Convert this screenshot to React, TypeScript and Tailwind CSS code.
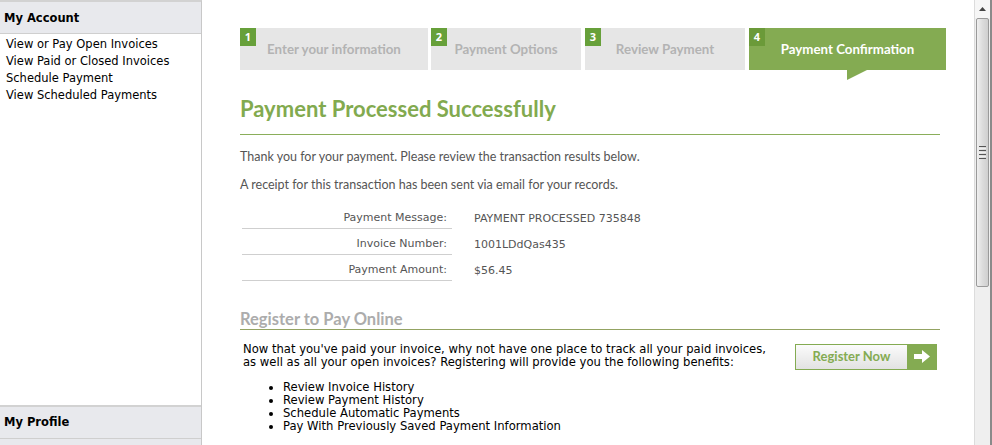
import React from "react";

const steps = [
  { n: 1, label: "Enter your information", w: "w-[188px]" },
  { n: 2, label: "Payment Options", w: "w-[150px] ml-[3px]" },
  { n: 3, label: "Review Payment", w: "w-[160px] ml-[4px]" },
  { n: 4, label: "Payment Confirmation", w: "w-[197px] ml-[4px]", active: true },
];

const details = [
  ["Payment Message:", "PAYMENT PROCESSED 735848"],
  ["Invoice Number:", "1001LDdQas435"],
  ["Payment Amount:", "$56.45"],
];

const benefits = [
  "Review Invoice History",
  "Review Payment History",
  "Schedule Automatic Payments",
  "Pay With Previously Saved Payment Information",
];

const verdana = "font-['DejaVu_Sans',Verdana,sans-serif]";
const calibri = "font-['Lato','Open_Sans',sans-serif]";

function Sidebar() {
  return (
    <aside className={`w-[202px] shrink-0 flex flex-col border-r border-[#c8c8c8] border-t-2 border-t-[#d2d2d2] ${verdana}`}>
      <div className="h-[32px] bg-[#e8e9ed] border-b border-[#cfcfcf] flex items-center pl-[4px] pt-[2px] text-[11.5px] font-bold text-black">
        My Account
      </div>
      <ul className="pl-[6px] pt-[2px] text-[11.5px] leading-[17px] text-black flex-1">
        <li>View or Pay Open Invoices</li>
        <li>View Paid or Closed Invoices</li>
        <li>Schedule Payment</li>
        <li>View Scheduled Payments</li>
      </ul>
      <div className="h-[33px] bg-[#e8e9ed] border-t-2 border-[#d2d2d2] flex items-center pl-[4px] pt-[1px] text-[11.5px] font-bold text-black">
        My Profile
      </div>
      <div className="h-[7px] bg-[#e8e9ed] border-t border-[#cfcfcf]" />
    </aside>
  );
}

function Steps() {
  return (
    <div className="relative flex h-[42px]">
      {steps.map((s) => (
        <div
          key={s.n}
          className={`${s.w} relative flex items-center justify-center ${s.active ? "bg-[#84ab52] text-white" : "bg-[#e6e6e6] text-[#b3b3b3]"}`}
        >
          <span
            className={`absolute left-0 top-0 w-[16px] h-[18px] flex items-center justify-center text-[11px] font-bold text-white ${s.active ? "bg-[#6b9a39]" : "bg-[#67a03a]"}`}
          >
            {s.n}
          </span>
          <span className={`${calibri} text-[13.3px] font-bold pt-[2px]`}>{s.label}</span>
          {s.active && (
            <svg className="absolute left-[98px] top-[42px]" width="20" height="10" viewBox="0 0 20 10">
              <polygon points="0,0 20,0 0,10" fill="#84ab52" />
            </svg>
          )}
        </div>
      ))}
    </div>
  );
}

function RegisterButton() {
  return (
    <button className="flex h-[26px] w-[142px] border border-[#84ab52]">
      <span className={`flex-1 flex items-center justify-center bg-gradient-to-b from-[#fbfbfb] to-[#e2e2e2] text-[#84ab52] text-[13px] font-bold ${calibri}`}>
        Register Now
      </span>
      <span className="w-[29px] bg-[#84ab52] flex items-center justify-center">
        <svg width="16" height="13" viewBox="0 0 16 13">
          <polygon points="0,4 8,4 8,0 16,6.5 8,13 8,9 0,9" fill="#fff" />
        </svg>
      </span>
    </button>
  );
}

function Scrollbar() {
  return (
    <div className="w-[18px] shrink-0 bg-[#efefef] border-l border-[#dcdcdc] border-r-2 border-r-[#8a8a8a] flex flex-col">
      <div className="h-[18px] bg-[#f6f6f6] flex items-center justify-center">
        <svg width="7" height="4" viewBox="0 0 7 4">
          <polygon points="3.5,0 7,4 0,4" fill="#444" />
        </svg>
      </div>
      <div className="h-[269px] mx-[1px] border border-[#9a9a9a] rounded-[2px] bg-gradient-to-r from-[#f0f0f0] via-[#dcdcdc] to-[#cfcfcf] flex items-center justify-center">
        <div className="flex flex-col gap-[1px]">
          <div className="w-[7px] h-[1px] bg-[#555]" />
          <div className="w-[7px] h-[1px] bg-[#eee]" />
          <div className="w-[7px] h-[1px] bg-[#555]" />
          <div className="w-[7px] h-[1px] bg-[#eee]" />
          <div className="w-[7px] h-[1px] bg-[#555]" />
          <div className="w-[7px] h-[1px] bg-[#eee]" />
          <div className="w-[7px] h-[1px] bg-[#555]" />
        </div>
      </div>
      <div className="flex-1" />
    </div>
  );
}

export default function App() {
  return (
    <div className="w-[992px] h-[445px] overflow-hidden bg-white flex">
      <Sidebar />
      <main className="flex-1 pl-[38px] pt-[28px] pr-[28px]">
        <Steps />

        <h1 className={`${calibri} mt-[25px] text-[22px] font-bold text-[#82aa4f] leading-[28px] pb-[11px] border-b border-[#8aae5a] w-[700px]`}>
          Payment Processed Successfully
        </h1>

        <div className={`${calibri} text-[12.5px] text-[#555] mt-[14px] leading-[16px] flex flex-col gap-[12px]`}>
          <p>Thank you for your payment. Please review the transaction results below.</p>
          <p>A receipt for this transaction has been sent via email for your records.</p>
        </div>

        <table className={`${verdana} mt-[9px] ml-[2px] text-[11px] text-[#555] border-collapse`}>
          <tbody>
            {details.map(([k, v]) => (
              <tr key={k} className="h-[26px]">
                <td className="w-[210px] text-right pr-[5px] pb-[1px] align-bottom border-b border-[#cfcfcf]">{k}</td>
                <td className="pl-[22px] pb-[1px] align-bottom">{v}</td>
              </tr>
            ))}
          </tbody>
        </table>

        <h2 className={`${calibri} mt-[28px] w-[700px] text-[16.5px] font-bold text-[#acacac] leading-[20px] border-b border-[#93a362]`}>
          Register to Pay Online
        </h2>

        <div className={`${verdana} flex justify-between items-start mt-[13px] pl-[3px] w-[697px] text-[11.6px] text-black leading-[13px]`}>
          <div>
            <p className="w-[535px]">
              Now that you've paid your invoice, why not have one place to track all your paid invoices, as well as all your open invoices? Registering will provide you the following benefits:
            </p>
            <ul className="mt-[12px] pl-[40px] list-disc">
              {benefits.map((b) => (
                <li key={b}>{b}</li>
              ))}
            </ul>
          </div>
          <div className="mt-[1px]">
            <RegisterButton />
          </div>
        </div>
      </main>
      <Scrollbar />
    </div>
  );
}
